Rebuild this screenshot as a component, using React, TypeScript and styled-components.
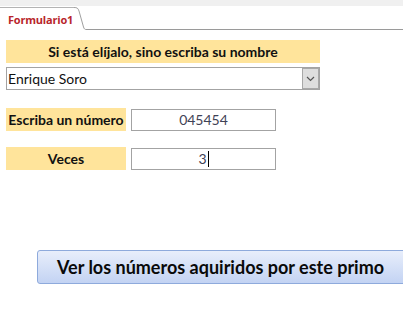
import React from "react";
import styled, { createGlobalStyle } from "styled-components";

const Global = createGlobalStyle`
  html, body { margin: 0; padding: 0; background: #ffffff; overflow: hidden; }
  body { font-family: "Lato", "Open Sans", sans-serif; }
`;

const Page = styled.div`
  width: 403px;
  height: 336px;
  display: flex;
  flex-direction: column;
  overflow: hidden;
`;

const TabStrip = styled.div`
  display: flex;
  align-items: flex-end;
  height: 30px;
  background: linear-gradient(#f0f0f0 0 6px, #ffffff 6px);
`;

const Tab = styled.div`
  height: 23px;
  width: 74px;
  box-sizing: border-box;
  border-top: 1px solid #b4b4b4;
  background: #ffffff;
  display: flex;
  align-items: center;
  padding-left: 8px;
  font-family: "Open Sans", sans-serif;
  font-weight: 700;
  font-size: 11px;
  color: #b8252b;
  letter-spacing: -0.2px;
`;

const TabCurve = styled.svg`
  display: block;
  flex: none;
`;

const TabRest = styled.div`
  flex: 1;
  height: 23px;
  box-sizing: border-box;
  border-bottom: 1px solid #9a9a9a;
`;

const Content = styled.div`
  display: flex;
  flex-direction: column;
  padding-left: 6px;
`;

const Label = styled.div<{ $w: number; $mt?: number }>`
  width: ${(p) => p.$w}px;
  height: 23px;
  margin-top: ${(p) => p.$mt ?? 0}px;
  background: #ffe49b;
  display: flex;
  align-items: center;
  justify-content: center;
  font-weight: 700;
  font-size: 14px;
  color: #111111;
  white-space: nowrap;
`;

const Combo = styled.div`
  margin-top: 4px;
  width: 314px;
  height: 23px;
  box-sizing: border-box;
  border: 1px solid #a3a3a3;
  display: flex;
  align-items: stretch;
  background: #ffffff;
`;

const ComboText = styled.div`
  flex: 1;
  display: flex;
  align-items: center;
  padding-left: 1px;
  font-size: 14px;
  color: #111111;
`;

const ComboButton = styled.div`
  width: 17px;
  box-sizing: border-box;
  background: #dedede;
  border: 1px solid #a8a8a8;
  display: flex;
  align-items: center;
  justify-content: center;
`;

const Row = styled.div<{ $mt: number }>`
  display: flex;
  align-items: center;
  gap: 5px;
  margin-top: ${(p) => p.$mt}px;
`;

const Field = styled.div`
  width: 145px;
  height: 22px;
  box-sizing: border-box;
  border: 1px solid #a3a3a3;
  display: flex;
  align-items: center;
  justify-content: center;
  font-size: 14px;
  color: #3f4256;
`;

const Caret = styled.span`
  display: inline-block;
  width: 1px;
  height: 16px;
  background: #000000;
  margin-left: 1px;
`;

const ActionButton = styled.div`
  margin-top: 80px;
  margin-left: 31px;
  width: 380px;
  flex: none;
  height: 34px;
  box-sizing: border-box;
  border: 1px solid #8eaadc;
  border-radius: 3px;
  background: linear-gradient(#e8eefb, #c3d3f3);
  display: flex;
  align-items: center;
  padding-left: 19px;
  font-weight: 700;
  font-size: 18px;
  color: #0a0a0a;
  white-space: nowrap;
`;

export default function App() {
  return (
    <Page>
      <Global />
      <TabStrip>
        <Tab>Formulario1</Tab>
        <TabCurve width="12" height="23" viewBox="0 0 12 23">
          <rect x="0" y="0" width="12" height="23" fill="#ffffff" />
          <path d="M0 0.5 C3 0.5 4 1 5 4 L9.5 20 C10.2 22 10.8 22.5 12 22.5" fill="none" stroke="#a0a0a0" strokeWidth="1" />
        </TabCurve>
        <TabRest />
      </TabStrip>
      <Content>
        <Label $w={314} $mt={10}>Si está elíjalo, sino escriba su nombre</Label>
        <Combo>
          <ComboText>Enrique Soro</ComboText>
          <ComboButton>
            <svg width="9" height="6" viewBox="0 0 9 6">
              <path d="M1 1 L4.5 4.5 L8 1" fill="none" stroke="#555" strokeWidth="1.2" />
            </svg>
          </ComboButton>
        </Combo>
        <Row $mt={18}>
          <Label $w={120}>Escriba un número</Label>
          <Field>045454</Field>
        </Row>
        <Row $mt={16}>
          <Label $w={120}>Veces</Label>
          <Field>
            3<Caret />
          </Field>
        </Row>
        <ActionButton>Ver los números aquiridos por este primo</ActionButton>
      </Content>
    </Page>
  );
}
